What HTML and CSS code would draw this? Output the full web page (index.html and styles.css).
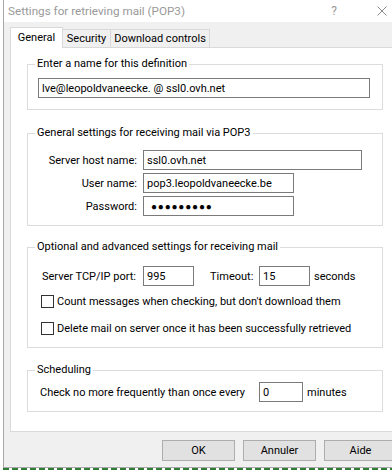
FILE: index.html
```html
<!DOCTYPE html>
<html lang="en">
<head>
    <meta charset="UTF-8">
    <title>Settings for retrieving mail (POP3)</title>
    <link rel="stylesheet" href="styles.css">
</head>
<body>
    <div class="window">
        <div class="titlebar">
            <span class="title">Settings for retrieving mail (POP3)</span>
            <span class="help">?</span>
            <svg class="close" width="10" height="10" viewBox="0 0 10 10">
                <path d="M0.5 0.5 L9.5 9.5 M9.5 0.5 L0.5 9.5" stroke="#8a8a8a" stroke-width="1" fill="none"/>
            </svg>
        </div>

        <div class="tabs">
            <div class="tab tab-general active">General</div>
            <div class="tab tab-security">Security</div>
            <div class="tab tab-download">Download controls</div>
        </div>

        <div class="panel">
            <fieldset class="group group-name">
                <legend>Enter a name for this definition</legend>
                <input class="field field-name" type="text" value="lve@leopoldvaneecke. @ ssl0.ovh.net">
            </fieldset>

            <fieldset class="group group-general">
                <legend>General settings for receiving mail via POP3</legend>
                <div class="form-grid">
                    <label>Server host name:</label>
                    <input class="field field-host" type="text" value="ssl0.ovh.net">
                    <label>User name:</label>
                    <input class="field field-user" type="text" value="pop3.leopoldvaneecke.be">
                    <label>Password:</label>
                    <div class="field field-user password">●●●●●●●●●</div>
                </div>
            </fieldset>

            <fieldset class="group group-advanced">
                <legend>Optional and advanced settings for receiving mail</legend>
                <div class="port-row">
                    <label class="port-label">Server TCP/IP port:</label>
                    <input class="field field-small" type="text" value="995">
                    <label class="timeout-label">Timeout:</label>
                    <input class="field field-small" type="text" value="15">
                    <span class="unit">seconds</span>
                </div>
                <label class="check-row"><span class="checkbox"></span>Count messages when checking, but don't download them</label>
                <label class="check-row"><span class="checkbox"></span>Delete mail on server once it has been successfully retrieved</label>
            </fieldset>

            <fieldset class="group group-schedule">
                <legend>Scheduling</legend>
                <div class="schedule-row">
                    <span class="schedule-label">Check no more frequently than once every</span>
                    <input class="field field-minutes" type="text" value="0">
                    <span class="unit">minutes</span>
                </div>
            </fieldset>
        </div>

        <div class="buttons">
            <button>OK</button>
            <button>Annuler</button>
            <button>Aide</button>
        </div>
    </div>
    <div class="desktop"></div>
</body>
</html>
```

FILE: styles.css
```css
body {
    margin: 0;
    width: 392px;
    height: 470px;
    overflow: hidden;
    background: #fff;
    font-family: Roboto, 'Liberation Sans', sans-serif;
    font-size: 11px;
    line-height: 15px;
    color: #000;
    white-space: nowrap;
}

.window {
    margin-left: 3px;
    border-left: 1px solid #a8a8a8;
    height: 467px;
    background: #f0f0f0;
}

.titlebar {
    height: 22px;
    background: #fff;
    display: flex;
    align-items: center;
    padding-left: 4px;
    color: #999;
}

.title {
    font-size: 11.7px;
    flex: 1;
}

.help {
    font-size: 12px;
    margin-right: 40px;
}

.close {
    margin-right: 5px;
}

.tabs {
    display: flex;
    align-items: flex-end;
    margin-top: 5px;
    padding-left: 6px;
    height: 20px;
}

.tab {
    height: 17px;
    line-height: 17px;
    text-align: center;
    border: 1px solid #d9d9d9;
    border-bottom: none;
    background: #f0f0f0;
    box-sizing: content-box;
}

.tab-general { width: 51px; }
.tab-security { width: 47px; margin-left: -1px; }
.tab-download { width: 98px; margin-left: -1px; }

.tab.active {
    height: 20px;
    line-height: 20px;
    background: #fff;
    margin-bottom: -1px;
    position: relative;
    z-index: 1;
}

.panel {
    margin-left: 6px;
    border: 1px solid #d9d9d9;
    background: #fff;
    width: 400px;
    height: 375px;
    padding-top: 8px;
}

.group {
    border: 1px solid #dcdcdc;
    margin: 0 0 0 16px;
    padding: 0 10px;
    width: 356px;
    box-sizing: border-box;
}

.group legend {
    padding: 0 2px;
    margin-left: -3px;
    line-height: 16px;
}

.field {
    border: 1px solid #7a7a7a;
    height: 20px;
    box-sizing: border-box;
    padding: 0 3px;
    font: inherit;
    color: #000;
    background: #fff;
    margin: 0;
    outline: none;
}

.group-name {
    padding-top: 6px;
    padding-bottom: 11px;
}

.field-name {
    width: 332px;
    display: block;
}

.group-general {
    margin-top: 15px;
    padding-top: 9px;
    padding-bottom: 9px;
}

.form-grid {
    display: grid;
    grid-template-columns: 99px auto;
    column-gap: 6px;
    row-gap: 3px;
    align-items: center;
    justify-items: start;
}

.form-grid label {
    justify-self: end;
}

.field-host { width: 219px; }
.field-user { width: 151px; }

.password {
    display: flex;
    align-items: center;
    font-size: 10px;
    letter-spacing: 0.8px;
    padding-left: 7px;
}

.group-advanced {
    margin-top: 13px;
    padding-top: 11px;
    padding-bottom: 11px;
}

.port-row {
    display: flex;
    align-items: center;
    padding-left: 4px;
}

.port-label { width: 101px; }
.timeout-label { width: 49px; margin-left: 16px; }
.field-small { width: 51px; }
.unit { margin-left: 4px; }

.check-row {
    display: flex;
    align-items: center;
    margin-left: 3px;
}

.port-row + .check-row { margin-top: 8px; }
.check-row + .check-row { margin-top: 12px; }

.checkbox {
    width: 11px;
    height: 11px;
    border: 1px solid #333;
    background: #fff;
    margin-right: 3px;
}

.group-schedule {
    margin-top: 14px;
    padding-top: 4px;
    padding-bottom: 9px;
}

.schedule-row {
    display: flex;
    align-items: center;
    padding-left: 2px;
}

.schedule-label { width: 219px; }
.field-minutes { width: 44px; }

.buttons {
    display: flex;
    gap: 8px;
    margin-top: 8px;
    margin-left: 158px;
}

.buttons button {
    width: 73px;
    height: 21px;
    flex-shrink: 0;
    border: 1px solid #adadad;
    background: #e1e1e1;
    font: inherit;
    color: #000;
    padding: 0;
}

.desktop {
    height: 3px;
    margin-left: 3px;
    border-top: 1px solid #a8a8a8;
    background: repeating-linear-gradient(90deg, #2e7d32 0 6px, #fff 6px 9px);
}
```
